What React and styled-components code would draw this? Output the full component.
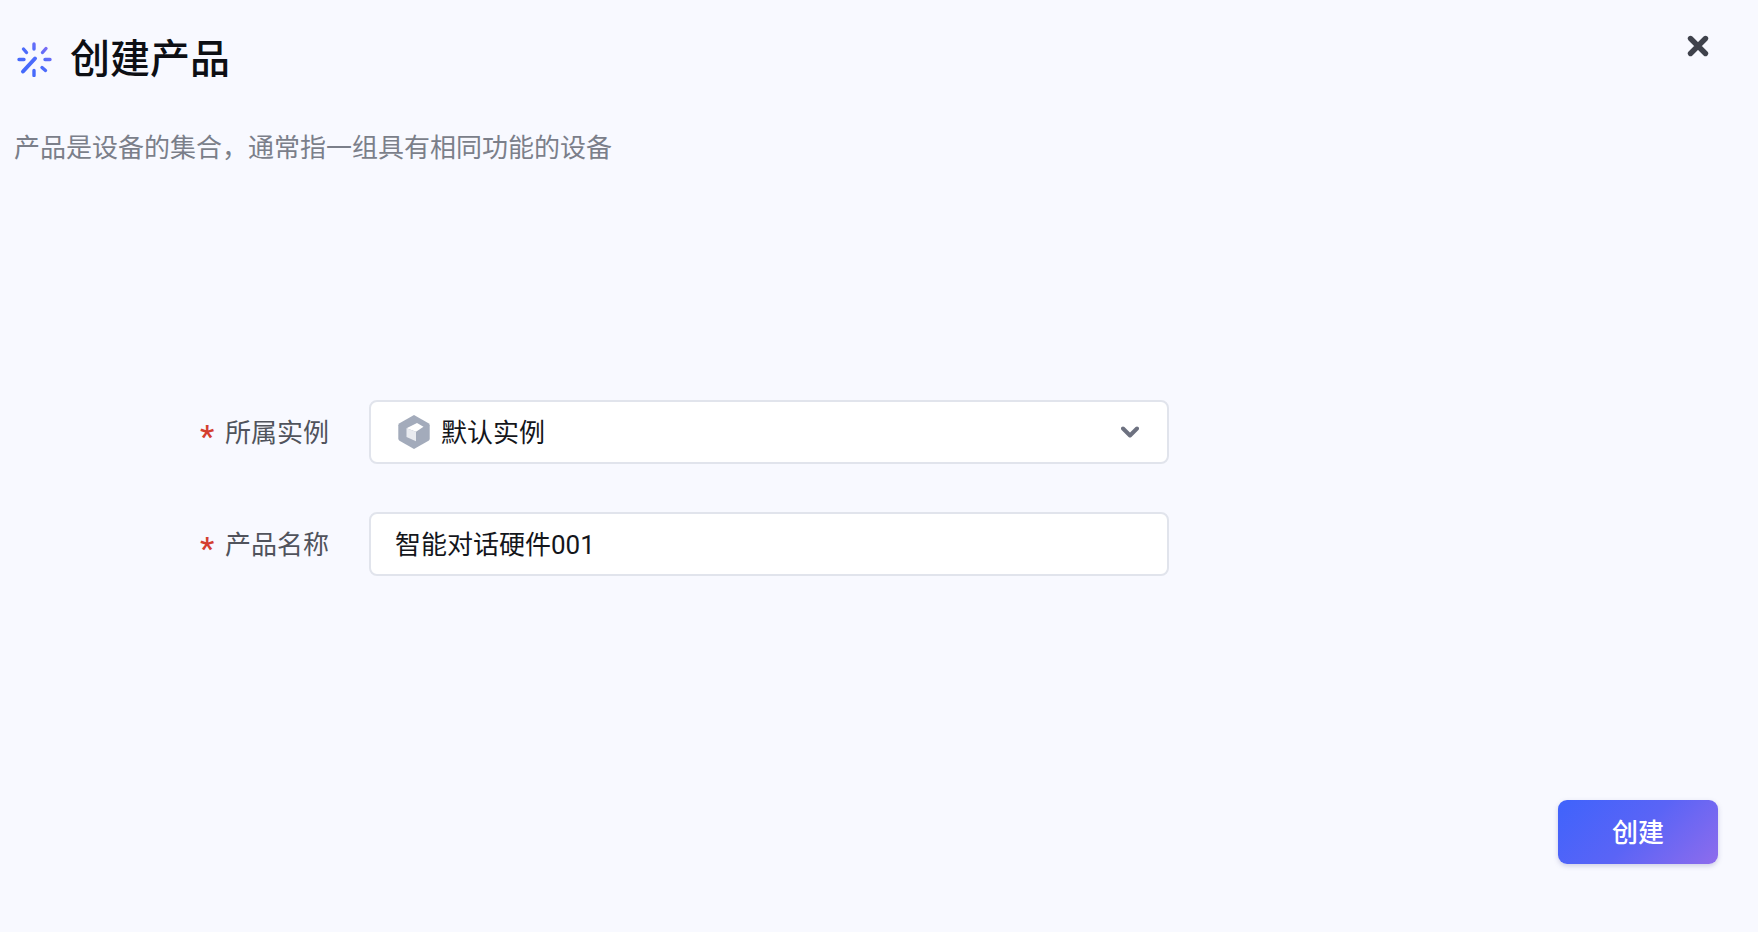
import React from 'react'
import styled, { createGlobalStyle } from 'styled-components'

const GlobalStyle = createGlobalStyle`
  html, body {
    margin: 0;
    height: 100%;
    background: #f8f9ff;
  }
  body {
    font-family: Roboto, "Noto Sans CJK SC", sans-serif;
  }
  * {
    box-sizing: border-box;
  }
`

const Page = styled.div`
  display: flex;
  flex-direction: column;
  width: 1758px;
  height: 932px;
  padding: 32px 40px 68px 14px;
  overflow: hidden;
`

const Header = styled.div`
  display: flex;
  justify-content: space-between;
  align-items: flex-start;
`

const TitleRow = styled.div`
  display: flex;
  align-items: center;
  gap: 18px;
  height: 54px;
  padding-left: 2px;
`

const Title = styled.h1`
  margin: 2px 0 0;
  font-size: 40px;
  font-weight: 500;
  line-height: 54px;
  color: #0d0f14;
`

const CloseButton = styled.button`
  display: flex;
  width: 24px;
  height: 24px;
  margin: 2px 8px 0 0;
  padding: 0;
  border: 0;
  background: none;
`

const Subtitle = styled.p`
  margin: 42px 0 0;
  font-size: 26px;
  line-height: 40px;
  color: #7b7f8a;
`

const Form = styled.div`
  display: flex;
  flex-direction: column;
  gap: 48px;
  margin-top: 232px;
  padding-left: 186px;
`

const Field = styled.div`
  display: flex;
  align-items: center;
  height: 64px;
`

const Label = styled.label`
  display: flex;
  align-items: center;
  width: 169px;
  padding-bottom: 4px;
  font-size: 26px;
  color: #50535c;
`

const Required = styled.span`
  width: 25px;
  padding-top: 12px;
  font-size: 32px;
  font-weight: 500;
  line-height: 26px;
  color: #d43f30;
`

const Control = styled.div`
  display: flex;
  align-items: center;
  width: 800px;
  height: 64px;
  padding: 0 28px 0 ${({ $left }) => $left}px;
  border: 2px solid #e1e4ec;
  border-radius: 8px;
  background: #fff;
  font-size: 26px;
  color: #14161b;
`

const ControlText = styled.span`
  flex: 1;
  padding-bottom: 4px;
`

const SelectIcon = styled.svg`
  width: 34px;
  height: 36px;
  margin-right: 10px;
`

const Footer = styled.div`
  display: flex;
  justify-content: flex-end;
  margin-top: auto;
`

const SubmitButton = styled.button`
  width: 160px;
  height: 64px;
  padding: 0 0 4px;
  border: 0;
  border-radius: 9px;
  background: linear-gradient(135deg, #3f63fc 0%, #5a64f6 50%, #8e6cec 100%);
  box-shadow: 0 2px 5px rgba(80, 80, 150, 0.25);
  font-family: inherit;
  font-size: 26px;
  font-weight: 500;
  color: #fff;
`

const SparkIcon = () => (
  <svg width="36" height="36" viewBox="0 0 36 36" fill="none" strokeWidth="3.4" strokeLinecap="round">
    <defs>
      <linearGradient id="spark" x1="0" y1="36" x2="36" y2="0" gradientUnits="userSpaceOnUse">
        <stop offset="0" stopColor="#3f68fc" />
        <stop offset="0.6" stopColor="#4f6cfb" />
        <stop offset="1" stopColor="#9a6cf0" />
      </linearGradient>
    </defs>
    <g stroke="url(#spark)">
      <path d="M18 3v5M18 29.500v5" />
      <path d="M3 18.500h5M29 18.500h5" />
      <path d="M7.500 8l3 3.500M26 26.500l3.500 3" />
      <path d="M30 7.500l-3.500 4" />
      <path d="M7 30.500l12-13" strokeWidth="4" />
    </g>
  </svg>
)

const CloseIcon = () => (
  <svg width="24" height="24" viewBox="0 0 24 24" fill="none" stroke="#3f424c" strokeWidth="5.400" strokeLinecap="round">
    <path d="M4.500 4.500l15 15M19.500 4.500l-15 15" />
  </svg>
)

const CubeIcon = () => (
  <SelectIcon viewBox="0 0 34 36">
    <path d="M17 1l14.500 8.200a2.500 2.500 0 0 1 1.200 2.100v13.400a2.500 2.500 0 0 1-1.200 2.100L17 35 2.500 26.700a2.500 2.500 0 0 1-1.200-2.100V11.300a2.500 2.500 0 0 1 1.200-2.100z" fill="#a3abbb" />
    <path d="M20 9l6.500 3.800-7.500 5-9.500-3.500z" fill="#ffffff" />
    <path d="M9.500 14.300l9.500 3.500v9.500L9.500 23z" fill="#e9ebf0" />
  </SelectIcon>
)

const ChevronIcon = () => (
  <svg width="18" height="12" viewBox="0 0 18 12" fill="none" stroke="#6d7180" strokeWidth="4" strokeLinecap="round" strokeLinejoin="round">
    <path d="M2 2.500l7 7 7-7" />
  </svg>
)

export default function App() {
  return (
    <>
      <GlobalStyle />
      <Page>
        <Header>
          <TitleRow>
            <SparkIcon />
            <Title>创建产品</Title>
          </TitleRow>
          <CloseButton>
            <CloseIcon />
          </CloseButton>
        </Header>
        <Subtitle>产品是设备的集合，通常指一组具有相同功能的设备</Subtitle>
        <Form>
          <Field>
            <Label>
              <Required>*</Required>
              所属实例
            </Label>
            <Control $left={26}>
              <CubeIcon />
              <ControlText>默认实例</ControlText>
              <ChevronIcon />
            </Control>
          </Field>
          <Field>
            <Label>
              <Required>*</Required>
              产品名称
            </Label>
            <Control $left={24}>
              <ControlText>智能对话硬件001</ControlText>
            </Control>
          </Field>
        </Form>
        <Footer>
          <SubmitButton>创建</SubmitButton>
        </Footer>
      </Page>
    </>
  )
}
